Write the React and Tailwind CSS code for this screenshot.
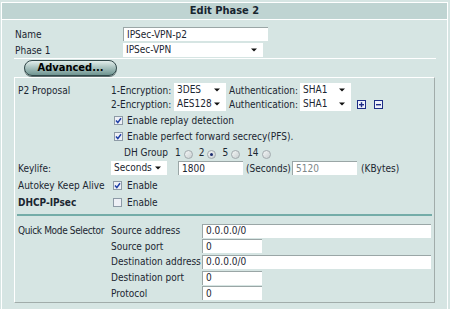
const font = "font-['DejaVu_Sans_Condensed','DejaVu_Sans',sans-serif]"

function TextBox({ value, w, grey }) {
  return (
    <div
      className={"h-[14px] bg-white border-t border-l border-[#9aa6a6] pl-[3px] flex items-center leading-none " + (grey ? 'text-[#7d8788]' : '')}
      style={{ width: w }}
    >
      {value}
    </div>
  )
}

function Select({ value, w }) {
  return (
    <div className="h-[14px] bg-white flex items-center pl-[3px] pr-[6px] leading-none" style={{ width: w }}>
      <span className="flex-1">{value}</span>
      <svg width="6" height="4" viewBox="0 0 6 4">
        <polygon points="0,0.5 6,0.5 3,3.5" fill="#111" />
      </svg>
    </div>
  )
}

function Check({ on }) {
  return (
    <span className="w-[9px] h-[9px] border border-[#8d9aa6] bg-[#eef0f6] flex items-center justify-center">
      {on && (
        <svg width="7" height="7" viewBox="0 0 7 7">
          <path d="M1 3.6 L2.8 5.6 L6 1.2" stroke="#1d3ea6" strokeWidth="1.5" fill="none" />
        </svg>
      )}
    </span>
  )
}

function Radio({ on }) {
  return (
    <span className="mt-[4px] w-[9px] h-[9px] rounded-full border border-[#a2aaae] bg-linear-to-br from-[#f4f6f6] to-[#c9d0d2] flex items-center justify-center">
      {on && <span className="w-[3px] h-[3px] rounded-full bg-[#1a2b6e]" />}
    </span>
  )
}

function BoxIcon({ minus }) {
  return (
    <svg width="9" height="9" viewBox="0 0 9 9">
      <rect x="0.5" y="0.5" width="8" height="8" fill="#eef1fa" stroke="#1c2c86" />
      <rect x="2" y="4" width="5" height="1.4" fill="#1c2c86" />
      {!minus && <rect x="3.8" y="2.2" width="1.4" height="5" fill="#1c2c86" />}
    </svg>
  )
}

function Row({ label, bold, className, children }) {
  return (
    <div className={"flex items-center h-[14px] " + (className || '')}>
      <div className={"w-[96px] pl-[3px] whitespace-nowrap " + (bold ? 'font-bold' : '')}>{label}</div>
      {children}
    </div>
  )
}

const qms = [
  ['Source address', '0.0.0.0/0', 229],
  ['Source port', '0', 60],
  ['Destination address', '0.0.0.0/0', 229],
  ['Destination port', '0', 60],
  ['Protocol', '0', 60],
]

export default function App() {
  return (
    <div className={"w-[450px] h-[309px] overflow-hidden bg-[#d6e5e3] pt-[2px] pl-[1px] text-[10px] text-[#1b2631] " + font}>
      <div className="w-[447px] h-[307px] border-l border-r border-white">
        <div className="h-[18px] border-t border-b border-white bg-[#bfd4d2] flex items-center justify-center font-bold text-[11px] text-[#17252f]">
          Edit Phase 2
        </div>

        <div className="mt-[6px] flex items-center h-[16px]">
          <div className="w-[121px] pl-[13px]">Name</div>
          <TextBox value="IPSec-VPN-p2" w={145} />
        </div>
        <div className="mt-[1px] flex items-center h-[14px]">
          <div className="w-[121px] pl-[13px]">Phase 1</div>
          <Select value="IPSec-VPN" w={140} />
        </div>

        <div className="mt-[1px] ml-[12px] w-[422px] border-t border-white" />

        <div className="mt-[1px] ml-[22px] w-[93px] h-[16px] rounded-full border border-[#31484a] bg-linear-to-b from-[#e2edeb] via-[#a5c0bd] to-[#6f9591] flex items-center justify-center font-bold text-[11px] text-black shadow-[0_1px_0_#5c6f6e]">
          Advanced...
        </div>

        <div className="mt-[1px] ml-[12px] w-[421px] h-[226px] border-t border-l border-white border-r border-b border-r-[#a1acaa] border-b-[#a1acaa]">
          <Row label="P2 Proposal" className="mt-[5px]">
            <span className="w-[63px]">1-Encryption:</span>
            <Select value="3DES" w={52} />
            <span className="ml-[3px] w-[71px]">Authentication:</span>
            <Select value="SHA1" w={51} />
          </Row>
          <Row label="">
            <span className="w-[63px]">2-Encryption:</span>
            <Select value="AES128" w={52} />
            <span className="ml-[3px] w-[71px]">Authentication:</span>
            <Select value="SHA1" w={51} />
            <span className="ml-[6px] flex"><BoxIcon /></span>
            <span className="ml-[8px] flex"><BoxIcon minus /></span>
          </Row>
          <Row label="" className="mt-[2px]">
            <span className="ml-[3px]"><Check on /></span>
            <span className="ml-[4px]">Enable replay detection</span>
          </Row>
          <Row label="" className="mt-[2px]">
            <span className="ml-[3px]"><Check on /></span>
            <span className="ml-[4px]">Enable perfect forward secrecy(PFS).</span>
          </Row>
          <Row label="" className="mt-[2px]">
            <span className="ml-[13px] flex items-center">
              <span>DH Group</span>
              <span className="ml-[7px]">1</span>
              <span className="ml-[3px]"><Radio /></span>
              <span className="ml-[6px]">2</span>
              <span className="ml-[3px]"><Radio on /></span>
              <span className="ml-[6px]">5</span>
              <span className="ml-[3px]"><Radio /></span>
              <span className="ml-[7px]">14</span>
              <span className="ml-[3px]"><Radio /></span>
            </span>
          </Row>
          <Row label="Keylife:" className="mt-[2px]">
            <Select value="Seconds" w={56} />
            <span className="ml-[11px]"><TextBox value="1800" w={65} /></span>
            <span className="ml-[3px] w-[46px]">(Seconds)</span>
            <TextBox value="5120" w={65} grey />
            <span className="ml-[4px]">(KBytes)</span>
          </Row>
          <Row label="Autokey Keep Alive" className="mt-[3px]">
            <span className="ml-[2px]"><Check on /></span>
            <span className="ml-[5px]">Enable</span>
          </Row>
          <Row label="DHCP-IPsec" bold className="mt-[3px]">
            <span className="ml-[2px]"><Check /></span>
            <span className="ml-[5px]">Enable</span>
          </Row>

          <div className="mt-[5px] ml-[2px] w-[415px] border-t-2 border-[#74aca8]" />

          <div className="mt-[7px] flex">
            <div className="w-[96px] pl-[3px] whitespace-nowrap h-[15px] flex items-center tracking-[-0.35px]">Quick Mode Selector</div>
            <div className="flex flex-col">
              {qms.map(([label, value, w]) => (
                <div key={label} className="flex items-center h-[15.6px]">
                  <span className="w-[91px] whitespace-nowrap">{label}</span>
                  <TextBox value={value} w={w} />
                </div>
              ))}
            </div>
          </div>
        </div>
      </div>
    </div>
  )
}
